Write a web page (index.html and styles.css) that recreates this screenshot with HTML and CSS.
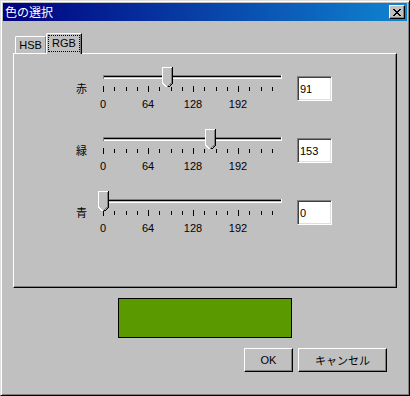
FILE: index.html
```html
<!DOCTYPE html>
<html lang="ja">
<head>
<meta charset="utf-8">
<title>色の選択</title>
<link rel="stylesheet" href="styles.css">
</head>
<body>
<div class="window">
  <div class="titlebar">
    <span class="title">色の選択</span>
    <span class="close">
      <svg width="8" height="7" viewBox="0 0 8 7" shape-rendering="crispEdges">
        <g fill="#000">
          <rect x="0" y="0" width="2" height="1"/><rect x="6" y="0" width="2" height="1"/>
          <rect x="1" y="1" width="2" height="1"/><rect x="5" y="1" width="2" height="1"/>
          <rect x="2" y="2" width="4" height="1"/>
          <rect x="3" y="3" width="2" height="1"/>
          <rect x="2" y="4" width="4" height="1"/>
          <rect x="1" y="5" width="2" height="1"/><rect x="5" y="5" width="2" height="1"/>
          <rect x="0" y="6" width="2" height="1"/><rect x="6" y="6" width="2" height="1"/>
        </g>
      </svg>
    </span>
  </div>
  <div class="content">
    <div class="tabs">
      <div class="tab">HSB</div>
      <div class="tab selected"><span class="focus">RGB</span></div>
    </div>
    <div class="panel">
      <div class="row">
        <span class="label">赤</span>
        <div class="slider">
          <div class="track"></div>
          <svg class="thumb" style="left:64px" width="11" height="20" viewBox="0 0 11 20" shape-rendering="crispEdges">
            <polygon points="0,0 11,0 11,16 5.5,20 0,16" fill="#c0c0c0"/>
            <path d="M0.5 16V0.5H10" fill="none" stroke="#fff"/>
            <path d="M0.5 16L4.5 20" fill="none" stroke="#fff"/>
            <path d="M9.5 1V16L5.5 19.5" fill="none" stroke="#808080"/>
            <path d="M10.5 0V16.5L5.5 21" fill="none" stroke="#000"/>
          </svg>
          <div class="ticks">
            <span class="major"></span><span></span><span></span><span></span>
            <span class="major"></span><span></span><span></span><span></span>
            <span class="major"></span><span></span><span></span><span></span>
            <span class="major"></span><span></span><span></span><span></span>
          </div>
          <div class="scale"><span>0</span><span>64</span><span>128</span><span>192</span></div>
        </div>
        <div class="field">91</div>
      </div>
      <div class="row">
        <span class="label">緑</span>
        <div class="slider">
          <div class="track"></div>
          <svg class="thumb" style="left:107px" width="11" height="20" viewBox="0 0 11 20" shape-rendering="crispEdges">
            <polygon points="0,0 11,0 11,16 5.5,20 0,16" fill="#c0c0c0"/>
            <path d="M0.5 16V0.5H10" fill="none" stroke="#fff"/>
            <path d="M0.5 16L4.5 20" fill="none" stroke="#fff"/>
            <path d="M9.5 1V16L5.5 19.5" fill="none" stroke="#808080"/>
            <path d="M10.5 0V16.5L5.5 21" fill="none" stroke="#000"/>
          </svg>
          <div class="ticks">
            <span class="major"></span><span></span><span></span><span></span>
            <span class="major"></span><span></span><span></span><span></span>
            <span class="major"></span><span></span><span></span><span></span>
            <span class="major"></span><span></span><span></span><span></span>
          </div>
          <div class="scale"><span>0</span><span>64</span><span>128</span><span>192</span></div>
        </div>
        <div class="field">153</div>
      </div>
      <div class="row">
        <span class="label">青</span>
        <div class="slider">
          <div class="track"></div>
          <svg class="thumb" style="left:0px" width="11" height="20" viewBox="0 0 11 20" shape-rendering="crispEdges">
            <polygon points="0,0 11,0 11,16 5.5,20 0,16" fill="#c0c0c0"/>
            <path d="M0.5 16V0.5H10" fill="none" stroke="#fff"/>
            <path d="M0.5 16L4.5 20" fill="none" stroke="#fff"/>
            <path d="M9.5 1V16L5.5 19.5" fill="none" stroke="#808080"/>
            <path d="M10.5 0V16.5L5.5 21" fill="none" stroke="#000"/>
          </svg>
          <div class="ticks">
            <span class="major"></span><span></span><span></span><span></span>
            <span class="major"></span><span></span><span></span><span></span>
            <span class="major"></span><span></span><span></span><span></span>
            <span class="major"></span><span></span><span></span><span></span>
          </div>
          <div class="scale"><span>0</span><span>64</span><span>128</span><span>192</span></div>
        </div>
        <div class="field">0</div>
      </div>
    </div>
    <div class="swatch"></div>
    <div class="buttons">
      <div class="btn ok">OK</div>
      <div class="btn cancel">キャンセル</div>
    </div>
  </div>
</div>
</body>
</html>
```
FILE: styles.css
```css
html, body {
  margin: 0;
  padding: 0;
  background: #c0c0c0;
}

body {
  font-family: "Liberation Sans", "Noto Sans CJK JP", sans-serif;
  font-size: 11px;
  color: #000;
}

.window {
  width: 410px;
  height: 396px;
  box-sizing: border-box;
  background: #c0c0c0;
  border: 1px solid;
  border-color: #dfdfdf #000 #000 #dfdfdf;
  box-shadow: inset 1px 1px #fff, inset -1px -1px #808080;
  padding: 2px;
}

.titlebar {
  height: 18px;
  display: flex;
  align-items: center;
  background: linear-gradient(to right, #000080, #1084d0);
  color: #fff;
  padding-left: 2px;
}

.title {
  font-family: "Noto Sans CJK JP", sans-serif;
  font-size: 12px;
  line-height: 18px;
}

.close {
  margin-left: auto;
  margin-right: 2px;
  width: 16px;
  height: 14px;
  box-sizing: border-box;
  background: #c0c0c0;
  border: 1px solid;
  border-color: #fff #000 #000 #fff;
  box-shadow: inset -1px -1px #808080;
  display: flex;
  align-items: center;
  justify-content: center;
}

.close svg {
  display: block;
}

.content {
  padding-top: 12px;
}

.tabs {
  display: flex;
  align-items: flex-end;
  height: 20px;
  padding-left: 12px;
}

.tab {
  box-sizing: border-box;
  width: 31px;
  height: 17px;
  border-top: 1px solid #fff;
  border-left: 1px solid #fff;
  border-right: 1px solid #808080;
  border-top-left-radius: 2px;
  display: flex;
  align-items: center;
  justify-content: center;
  line-height: 16px;
  background: #c0c0c0;
}

.tab.selected {
  position: relative;
  z-index: 1;
  width: 36px;
  height: 21px;
  margin-bottom: -1px;
  padding: 1px;
  border-right: 1px solid #000;
  box-shadow: inset -1px 0 #808080;
  align-items: flex-start;
}

.focus {
  display: block;
  box-sizing: border-box;
  width: 32px;
  height: 17px;
  border: 1px dotted #000;
  text-align: center;
  line-height: 15px;
}

.panel {
  margin-left: 10px;
  width: 384px;
  height: 235px;
  box-sizing: border-box;
  border: 1px solid;
  border-color: #fff #000 #000 #fff;
  box-shadow: inset -1px -1px #808080;
  padding-top: 13px;
}

.row {
  display: flex;
  align-items: flex-start;
  height: 62px;
  padding-left: 62px;
}

.label {
  width: 11px;
  margin-top: 16px;
  font-family: "Noto Sans CJK JP", sans-serif;
  font-size: 11px;
  line-height: 11px;
}

.slider {
  position: relative;
  width: 199px;
  margin-left: 11px;
}

.track {
  margin-left: 5px;
  margin-top: 8px;
  width: 179px;
  height: 4px;
  background: linear-gradient(#808080 0 1px, #000 1px 2px, #c0c0c0 2px 3px, #fff 3px 4px);
  box-shadow: inset 1px 0 #808080, inset -1px 0 #fff;
}

.thumb {
  position: absolute;
  top: 0;
  display: block;
}

.ticks {
  display: flex;
  align-items: flex-start;
  margin-left: 5px;
  margin-top: 7px;
  height: 6px;
}

.ticks span {
  flex: none;
  width: 11.25px;
  height: 4px;
  margin-top: 1px;
  box-sizing: border-box;
  border-left: 1px solid #000;
}

.ticks span.major {
  height: 6px;
  margin-top: 0;
}

.scale {
  display: flex;
  margin-left: -17.5px;
  margin-top: 6px;
  line-height: 13px;
}

.scale span {
  width: 45px;
  flex: none;
  text-align: center;
}

.field {
  width: 35px;
  height: 25px;
  margin-top: 9px;
  box-sizing: border-box;
  background: #fff;
  border: 1px solid;
  border-color: #808080 #fff #fff #808080;
  box-shadow: inset 1px 1px #404040, inset -1px -1px #dfdfdf;
  padding-left: 2px;
  display: flex;
  align-items: center;
}

.swatch {
  width: 174px;
  height: 40px;
  box-sizing: border-box;
  margin: 10px auto 0;
  border: 1px solid #000;
  background: rgb(91, 153, 0);
}

.buttons {
  display: flex;
  justify-content: flex-end;
  gap: 5px;
  margin-top: 10px;
  padding-right: 20px;
}

.btn {
  height: 24px;
  box-sizing: border-box;
  border: 1px solid;
  border-color: #fff #000 #000 #fff;
  box-shadow: inset -1px -1px #808080;
  display: flex;
  align-items: center;
  justify-content: center;
}

.btn.ok {
  width: 49px;
}

.btn.cancel {
  width: 89px;
  font-family: "Noto Sans CJK JP", sans-serif;
}
```
